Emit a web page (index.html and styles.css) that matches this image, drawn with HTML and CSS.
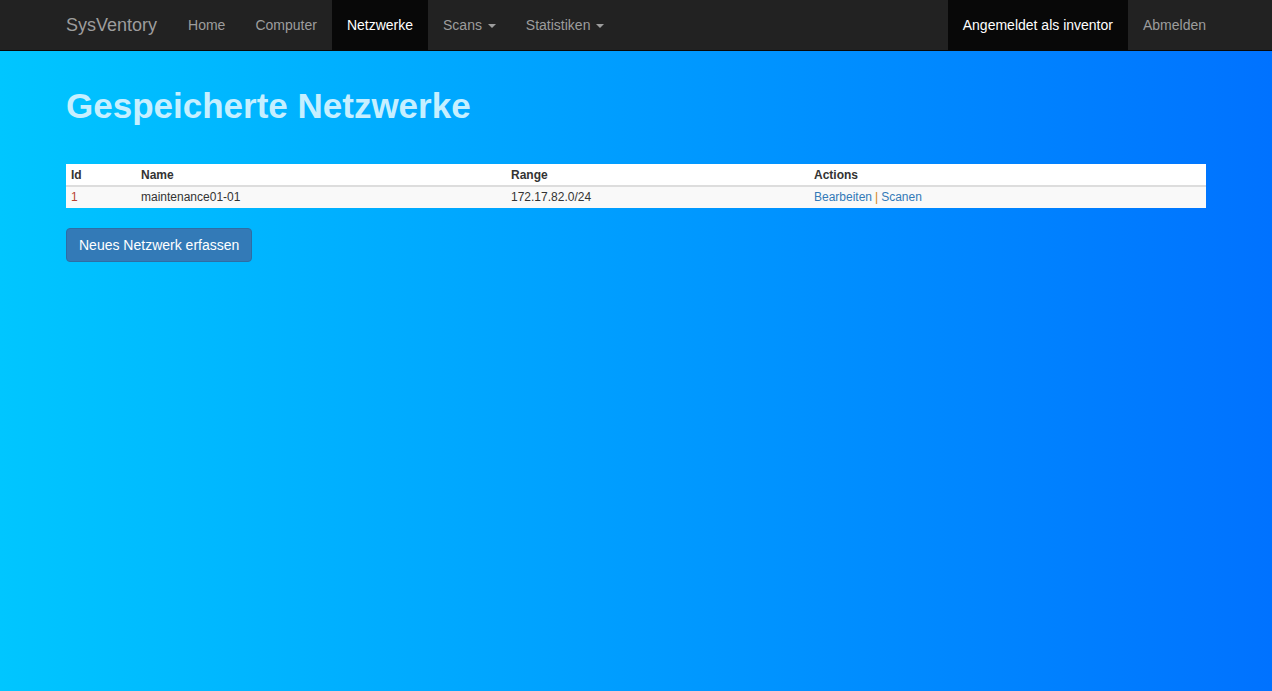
FILE: index.html
```html
<!DOCTYPE html>
<html lang="de">
<head>
<meta charset="utf-8">
<title>SysVentory</title>
<link rel="stylesheet" href="styles.css">
</head>
<body>
<nav class="navbar">
  <div class="container nav-inner">
    <div class="nav-left">
      <a class="brand" href="#">SysVentory</a>
      <ul class="nav">
        <li><a href="#">Home</a></li>
        <li><a href="#">Computer</a></li>
        <li class="active"><a href="#">Netzwerke</a></li>
        <li><a href="#">Scans <span class="caret"></span></a></li>
        <li><a href="#">Statistiken <span class="caret"></span></a></li>
      </ul>
    </div>
    <ul class="nav nav-right">
      <li class="active"><a href="#">Angemeldet als inventor</a></li>
      <li><a href="#">Abmelden</a></li>
    </ul>
  </div>
</nav>
<main class="container">
  <h1 class="title">Gespeicherte Netzwerke</h1>
  <table class="table">
    <thead>
      <tr>
        <th class="c-id">Id</th>
        <th class="c-name">Name</th>
        <th class="c-range">Range</th>
        <th>Actions</th>
      </tr>
    </thead>
    <tbody>
      <tr>
        <td class="id">1</td>
        <td>maintenance01-01</td>
        <td>172.17.82.0/24</td>
        <td><a href="#">Bearbeiten</a><span class="sep">|</span><a href="#">Scanen</a></td>
      </tr>
    </tbody>
  </table>
  <button class="btn" type="button">Neues Netzwerk erfassen</button>
</main>
</body>
</html>
```

FILE: styles.css
```css
* { box-sizing: border-box; }
html, body { height: 100%; }
body {
  margin: 0;
  font-family: "Liberation Sans", Arial, Helvetica, sans-serif;
  font-size: 14px;
  line-height: 1.42857;
  color: #333;
  background: linear-gradient(to right, #00c6ff, #0072ff);
  min-height: 691px;
}
a { text-decoration: none; }
.container {
  width: 1170px;
  padding: 0 15px;
  margin: 0 auto;
}
.navbar {
  background: #222;
  border-bottom: 1px solid #080808;
  height: 51px;
}
.nav-inner {
  display: flex;
  justify-content: space-between;
  height: 50px;
}
.nav-left { display: flex; }
.brand {
  color: #9d9d9d;
  font-size: 18px;
  line-height: 20px;
  padding: 15px 16px 15px 15px;
  margin-left: -15px;
  height: 50px;
}
.nav {
  list-style: none;
  margin: 0;
  padding: 0;
  display: flex;
}
.nav li a {
  display: block;
  padding: 15px;
  line-height: 20px;
  color: #9d9d9d;
  height: 50px;
}
.nav li.active a {
  color: #fff;
  background: #080808;
}
.nav-right { margin-right: -15px; }
.caret {
  display: inline-block;
  width: 0;
  height: 0;
  margin-left: 2px;
  vertical-align: middle;
  border-top: 4px solid #9d9d9d;
  border-left: 4px solid transparent;
  border-right: 4px solid transparent;
}
.title {
  margin: 35px 0 0;
  font-size: 35px;
  line-height: 40px;
  font-weight: bold;
  color: #c6efff;
  height: 78px;
}
.table {
  width: 100%;
  border-collapse: collapse;
  background: #fff;
  font-size: 12px;
  line-height: 16px;
  margin-bottom: 20px;
}
.table th, .table td {
  text-align: left;
  padding: 3px 5px;
}
.table th {
  color: #333;
  font-weight: bold;
  border-bottom: 2px solid #ddd;
  padding-bottom: 2px;
}
.table tbody tr { background: #f9f9f9; }
.table td { padding-top: 2px; }
.c-id { width: 70px; }
.c-name { width: 370px; }
.c-range { width: 303px; }
.id { color: #b8412f; }
.table a { color: #337ab7; }
.sep { color: #d58512; margin: 0 3px 0 3px; }
.btn {
  font-family: inherit;
  font-size: 14px;
  line-height: 20px;
  padding: 6px 12px;
  height: 34px;
  color: #fff;
  background: #337ab7;
  border: 1px solid #2e6da4;
  border-radius: 4px;
  cursor: pointer;
}
```
